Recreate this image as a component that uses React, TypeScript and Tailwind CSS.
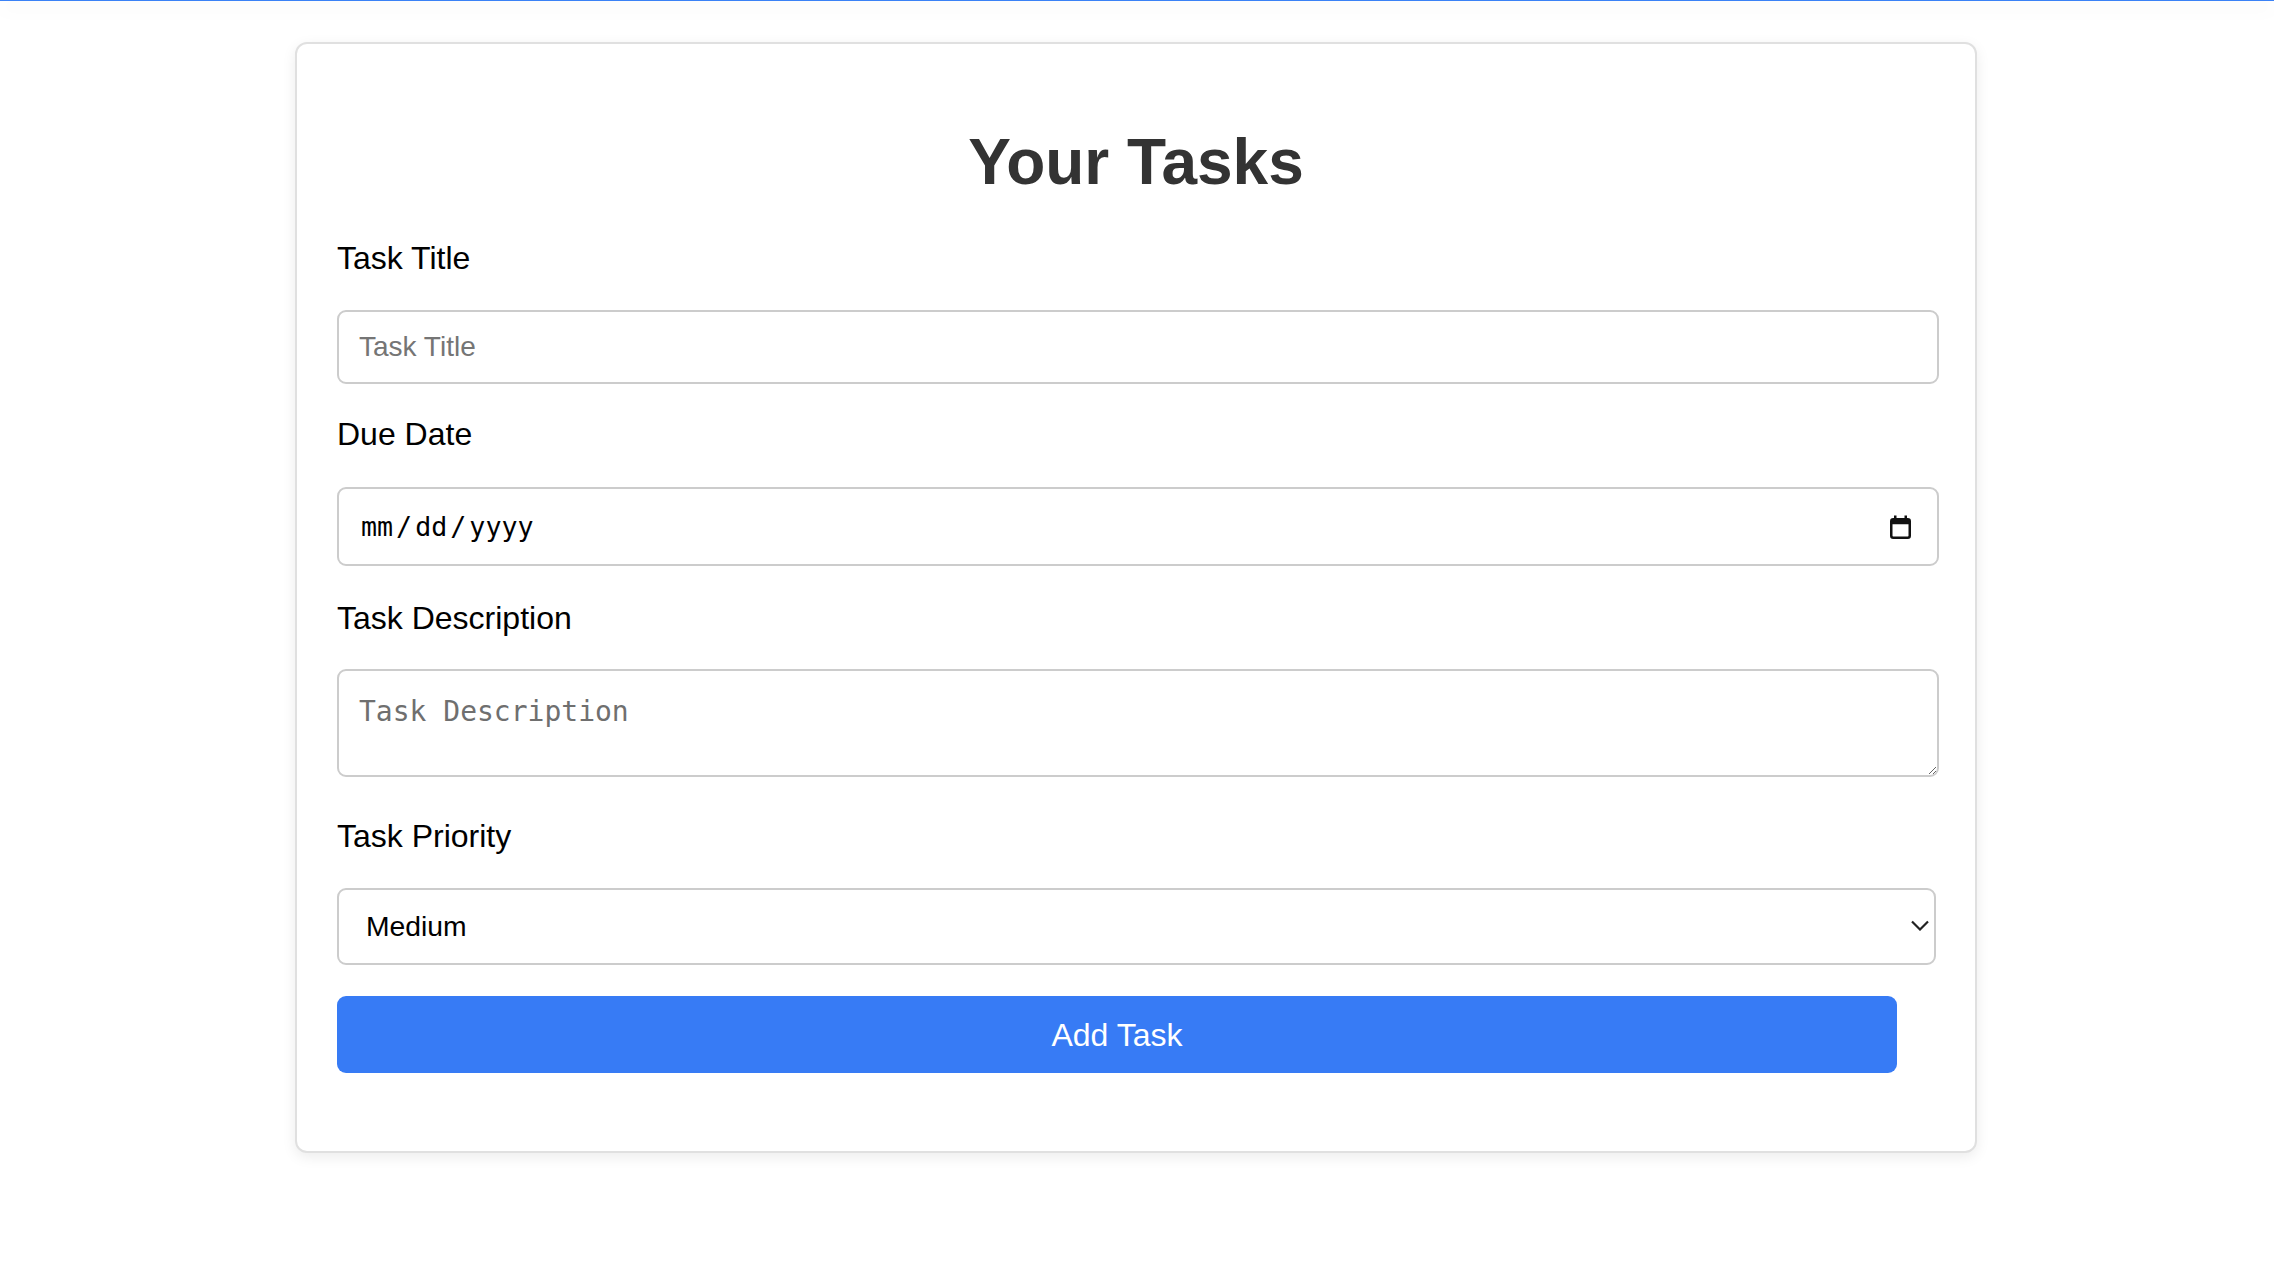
import { useState } from "react";

const CalendarIcon = () => (
  <svg width="21" height="24" viewBox="0 0 21 24" fill="none">
    <rect x="1.25" y="4.25" width="18.5" height="18.5" rx="2" stroke="#111" strokeWidth="2.5" />
    <rect x="1.25" y="4.25" width="18.5" height="5" fill="#111" />
    <rect x="4" y="0.5" width="2.5" height="4" fill="#111" />
    <rect x="14.5" y="0.5" width="2.5" height="4" fill="#111" />
  </svg>
);

const Chevron = () => (
  <svg width="18" height="11" viewBox="0 0 18 11" fill="none">
    <polyline points="1,1.5 9,9.5 17,1.5" stroke="#222" strokeWidth="2.2" />
  </svg>
);

export default function App() {
  const [title, setTitle] = useState("");
  const [description, setDescription] = useState("");
  const [priority, setPriority] = useState("Medium");

  return (
    <div className="min-h-screen bg-white font-['Liberation_Sans',Arial,sans-serif]">
      <div className="h-px bg-[#3b82f6] shadow-[0_6px_18px_rgba(0,0,0,0.22)]" />

      <div className="mx-auto mt-[41px] w-[1682px] -translate-x-px rounded-[12px] border-2 border-[#e0e0e0] bg-white p-[40px] shadow-[0_4px_14px_rgba(0,0,0,0.08)]">
        <h1 className="mt-[41px] mb-[41px] text-center text-[64px] font-bold leading-[74px] text-[#333]">
          Your Tasks
        </h1>

        <div className="flex flex-col">
          <label className="mb-[33px] text-[32px] leading-[37px] text-black">
            Task Title
          </label>
          <input
            type="text"
            value={title}
            onChange={(e) => setTitle(e.target.value)}
            placeholder="Task Title"
            className="mb-[32px] h-[74px] w-[1602px] rounded-[9px] border-2 border-[#cccccc] px-[20px] text-[28px] text-black outline-none placeholder:text-[#757575]"
          />

          <label className="mb-[34px] text-[32px] leading-[37px] text-black">
            Due Date
          </label>
          <div className="mb-[34px] flex h-[79px] w-[1602px] items-center justify-between rounded-[9px] border-2 border-[#cccccc] pr-[26px] pl-[22px]">
            <span className="font-['DejaVu_Sans_Mono',monospace] text-[26.67px] text-black">
              mm<span className="mx-[3px]">/</span>dd<span className="mx-[3px]">/</span>yyyy
            </span>
            <CalendarIcon />
          </div>

          <label className="mb-[32px] text-[32px] leading-[37px] text-black">
            Task Description
          </label>
          <textarea
            value={description}
            onChange={(e) => setDescription(e.target.value)}
            placeholder="Task Description"
            className="mb-[41px] block h-[108px] w-[1602px] rounded-[9px] border-2 border-[#cccccc] p-[20px] font-['DejaVu_Sans_Mono',monospace] text-[28px] text-black outline-none placeholder:text-[#6f6f6f]"
          />

          <label className="mb-[33px] text-[32px] leading-[37px] text-black">
            Task Priority
          </label>
          <div className="relative mb-[31px] w-[1599px]">
            <select
              value={priority}
              onChange={(e) => setPriority(e.target.value)}
              className="h-[77px] w-full appearance-none rounded-[9px] border-2 border-[#cccccc] bg-white pl-[27px] text-[28.3px] text-black outline-none"
            >
              <option>Low</option>
              <option>Medium</option>
              <option>High</option>
            </select>
            <div className="pointer-events-none absolute top-[32px] right-[7px]">
              <Chevron />
            </div>
          </div>

          <button className="mb-[38px] h-[77px] w-[1560px] rounded-[9px] bg-[#377bf5] text-[32px] text-white">
            Add Task
          </button>
        </div>
      </div>
    </div>
  );
}
